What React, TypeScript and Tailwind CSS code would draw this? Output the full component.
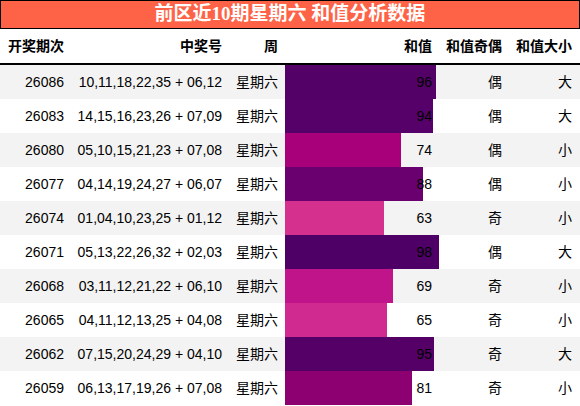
import React from 'react';

type Row = {
    issue: string;
    numbers: string;
    week: string;
    sum: number;
    color: string;
    parity: string;
    size: string;
};

const rows: Row[] = [
    { issue: '26086', numbers: '10,11,18,22,35 + 06,12', week: '星期六', sum: 96, color: '#530067', parity: '偶', size: '大' },
    { issue: '26083', numbers: '14,15,16,23,26 + 07,09', week: '星期六', sum: 94, color: '#56006a', parity: '偶', size: '大' },
    { issue: '26080', numbers: '05,10,15,21,23 + 07,08', week: '星期六', sum: 74, color: '#a8007a', parity: '偶', size: '小' },
    { issue: '26077', numbers: '04,14,19,24,27 + 06,07', week: '星期六', sum: 88, color: '#6a0070', parity: '偶', size: '小' },
    { issue: '26074', numbers: '01,04,10,23,25 + 01,12', week: '星期六', sum: 63, color: '#d6308f', parity: '奇', size: '小' },
    { issue: '26071', numbers: '05,13,22,26,32 + 02,03', week: '星期六', sum: 98, color: '#4f0066', parity: '偶', size: '大' },
    { issue: '26068', numbers: '03,11,12,21,22 + 06,10', week: '星期六', sum: 69, color: '#c0148a', parity: '奇', size: '小' },
    { issue: '26065', numbers: '04,11,12,13,25 + 04,08', week: '星期六', sum: 65, color: '#d02a90', parity: '奇', size: '小' },
    { issue: '26062', numbers: '07,15,20,24,29 + 04,10', week: '星期六', sum: 95, color: '#540067', parity: '奇', size: '大' },
    { issue: '26059', numbers: '06,13,17,19,26 + 07,08', week: '星期六', sum: 81, color: '#8c0072', parity: '奇', size: '小' },
];

const font = { fontFamily: '"Liberation Sans", Arial, "Noto Sans CJK SC", sans-serif' };
const titleFont = { fontFamily: '"Liberation Serif", "Noto Sans CJK SC", serif' };

const cols = 'grid grid-cols-[70px_159px_56px_157px_67px_71px]';

export default function App() {
    return (
        <div className="w-[580px] h-[406px] bg-white text-black overflow-hidden" style={font}>
            <div
                className="h-[29px] bg-[#ff6347] border border-black flex items-center justify-center text-white text-[19px] font-bold"
                style={titleFont}
            >
                前区近10期星期六 和值分析数据
            </div>
            <div className={`${cols} h-[36px] border-b-2 border-black text-[14px] font-bold items-center text-right`}>
                <div className="pr-[6px]">开奖期次</div>
                <div className="pr-[7px]">中奖号</div>
                <div className="pr-[7px]">周</div>
                <div className="pr-[10px]">和值</div>
                <div className="pr-[7px]">和值奇偶</div>
                <div className="pr-[8px]">和值大小</div>
            </div>
            {rows.map((r, i) => (
                <div
                    key={r.issue}
                    className={`${cols} h-[34px] text-[14px] items-center text-right ${i % 2 === 0 ? 'bg-[#f3f3f3]' : 'bg-white'}`}
                >
                    <div className="pr-[6px]">{r.issue}</div>
                    <div className="pr-[7px]">{r.numbers}</div>
                    <div className="pr-[7px]">{r.week}</div>
                    <div className="relative h-full flex items-center justify-end pr-[10px]">
                        <div className="absolute left-0 top-0 h-full" style={{ width: `${r.sum}%`, backgroundColor: r.color }} />
                        <span className="relative">{r.sum}</span>
                    </div>
                    <div className="pr-[7px]">{r.parity}</div>
                    <div className="pr-[8px]">{r.size}</div>
                </div>
            ))}
        </div>
    );
}
